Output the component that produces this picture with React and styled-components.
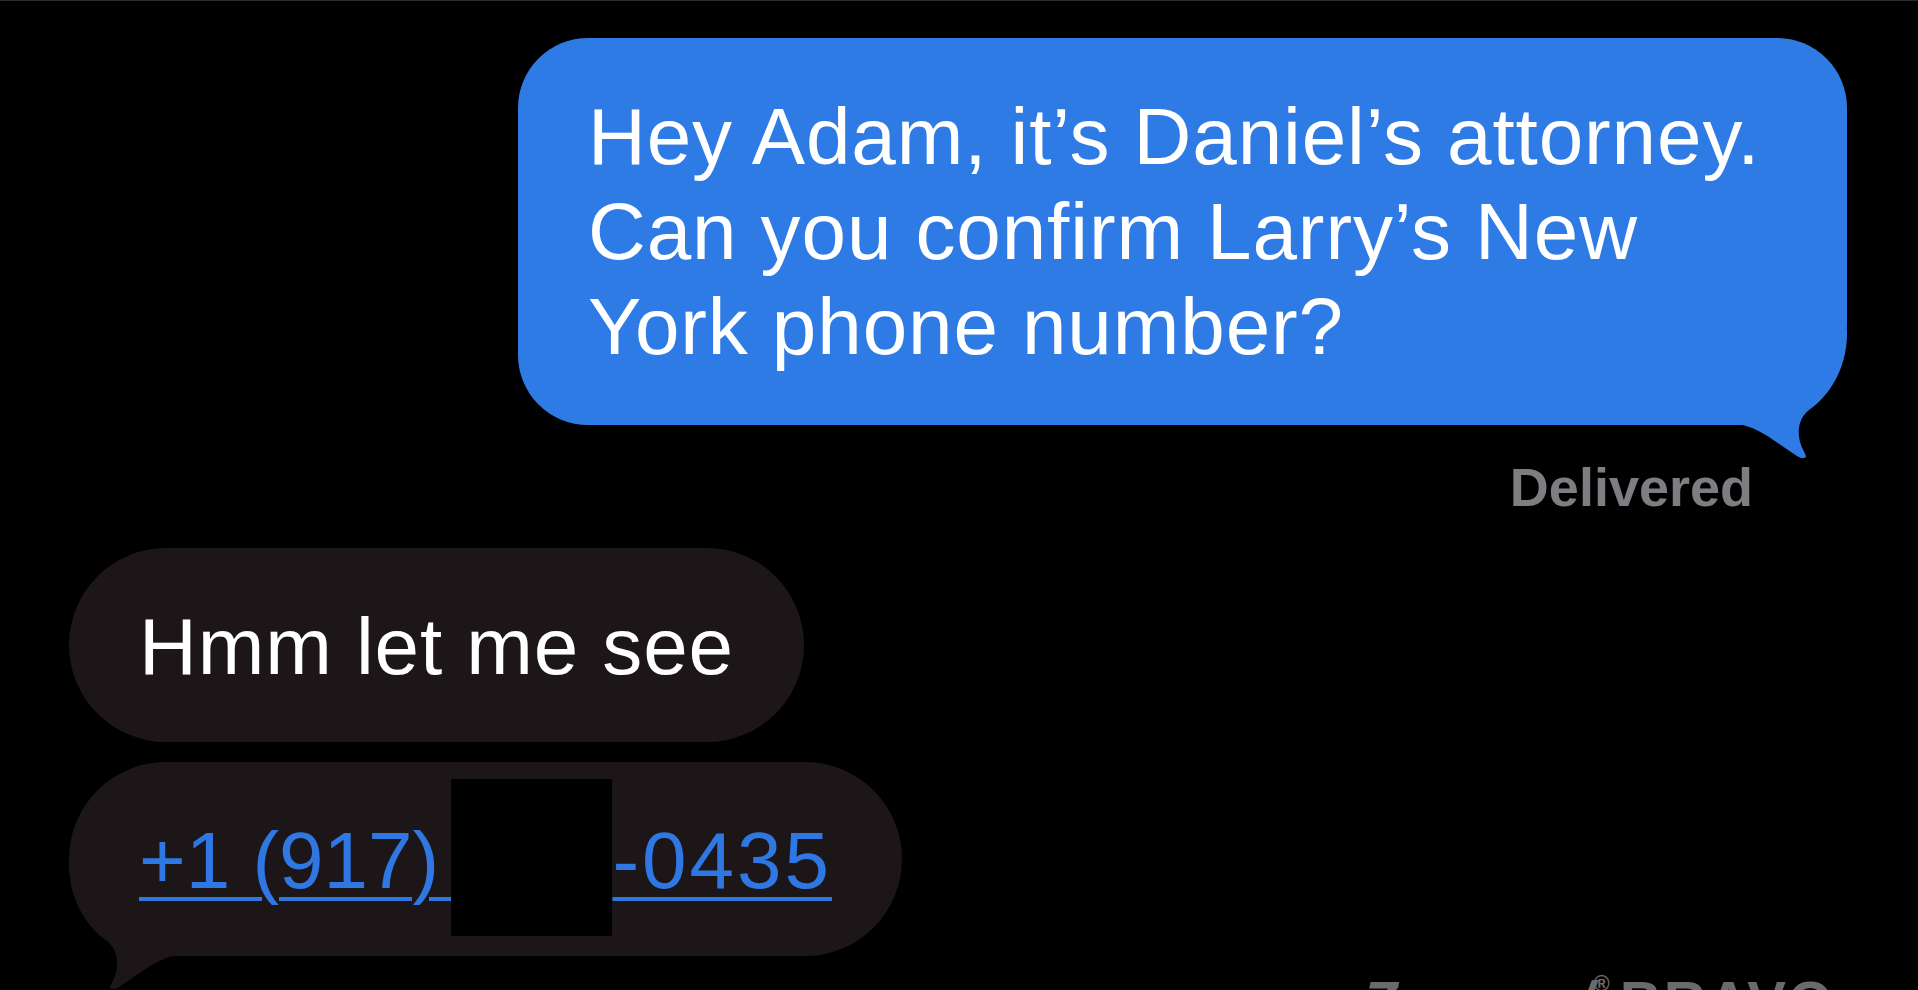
import React from 'react';
import styled, {createGlobalStyle, css} from 'styled-components';

const GlobalStyle = createGlobalStyle`
    html, body {
        margin: 0;
        padding: 0;
        background: #000;
    }
    body {
        font-family: "Liberation Sans", Arial, sans-serif;
        -webkit-font-smoothing: antialiased;
    }
`;

const Screen = styled.div`
    position: relative;
    height: 990px;
    box-sizing: border-box;
    overflow: hidden;
    background: #000;
    border-top: 1px solid #2b2a2f;
    display: flex;
    flex-direction: column;
`;

const Row = styled.div`
    display: flex;
    justify-content: ${props => props.outgoing ? 'flex-end' : 'flex-start'};
    padding: 0 ${props => props.outgoing ? '71px' : '0'} 0 ${props => props.outgoing ? '0' : '69px'};
`;

const Bubble = styled.div`
    position: relative;
    box-sizing: border-box;
    font-size: 80px;
    line-height: 95px;
    letter-spacing: 0.9px;
    color: #fff;

    ${props => props.outgoing ? css`
        width: 1329px;
        margin-top: 37px;
        padding: 51px 70px;
        border-radius: 70px 70px 100px 70px;
        background: #2f7be5;
    ` : css`
        padding: 51px 70px 48px;
        border-radius: 97px;
        background: #1d1619;
        white-space: nowrap;
    `}
`;

const TailSvg = styled.svg`
    position: absolute;
    bottom: -35px;
    width: 112px;
    height: 130px;
    ${props => props.left ? css`
        left: -2px;
        transform: scaleX(-1);
    ` : css`
        right: -2px;
    `}
`;

const Status = styled.div`
    display: flex;
    justify-content: flex-end;
    padding-right: 165px;
    margin: 32px 0 31px;
    font-size: 54px;
    line-height: 60px;
    font-weight: 700;
    color: #7d7d82;
`;

const Stack = styled.div`
    display: flex;
    flex-direction: column;
    align-items: flex-start;
    gap: 20px;
`;

const PhoneLink = styled.span`
    position: relative;
    z-index: 1;
    color: #2f78e4;
    letter-spacing: 0;
    text-decoration: underline;
    text-decoration-thickness: 4px;
    text-underline-offset: 9px;
`;

const Digits = styled.span`
    letter-spacing: 3px;
`;

const Redacted = styled.span`
    display: inline-block;
    width: 161px;
    height: 157px;
    margin: -50px 0 -48px -10px;
    background: #000;
    vertical-align: baseline;
`;

const Watermark = styled.div`
    position: absolute;
    top: 972px;
    left: 1362px;
    display: flex;
    align-items: flex-start;
    color: #6a6a6a;
    font-weight: 700;
    font-size: 58px;
    line-height: 1;
`;

const Mark = styled.span`
    margin-left: ${props => props.gap || 0}px;
    font-size: ${props => props.size || 58}px;
    font-style: ${props => props.upright ? 'normal' : 'italic'};
    letter-spacing: ${props => props.spread || 0}px;
`;

function Tail({left, color}) {
    return (
        <TailSvg left={left} viewBox="0 0 112 130">
            <path
                d="M110 0 L110 6 C109 40 92 66 72 80 C62 88 60 100 63 112 C65 119 69 124 69 127 C67 129 63 128 60 126 C44 116 26 100 6 95 L6 0 Z"
                fill={color}
            />
        </TailSvg>
    );
}

export default function App() {
    return (
        <>
            <GlobalStyle/>
            <Screen>
                <Row outgoing>
                    <Bubble outgoing>
                        Hey Adam, it’s Daniel’s attorney. Can you confirm Larry’s New York phone number?
                        <Tail color="#2f7be5"/>
                    </Bubble>
                </Row>
                <Status>Delivered</Status>
                <Row>
                    <Stack>
                        <Bubble>Hmm let me see</Bubble>
                        <Bubble>
                            <Tail left color="#1d1619"/>
                            <PhoneLink>
                                +1 (917)&nbsp;<Redacted/><Digits>-0435</Digits>
                            </PhoneLink>
                        </Bubble>
                    </Stack>
                </Row>
                <Watermark>
                    <Mark>Z</Mark>
                    <Mark gap={180}>/</Mark>
                    <Mark size={22} upright>®</Mark>
                    <Mark gap={10} upright spread={2}>BRAVO</Mark>
                </Watermark>
            </Screen>
        </>
    );
}
